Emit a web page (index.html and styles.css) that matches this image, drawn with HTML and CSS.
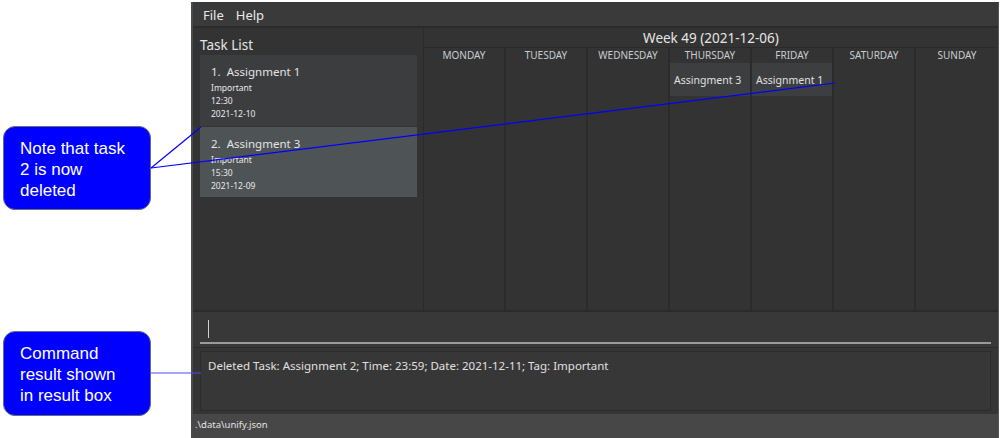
FILE: index.html
```html
<!DOCTYPE html>
<html>
<head>
<meta charset="utf-8">
<link rel="stylesheet" href="styles.css">
</head>
<body>
<div class="app">
  <div class="menubar"><span class="menu">File</span><span class="menu">Help</span></div>
  <div class="main">
    <div class="tasklist">
      <div class="tl-title">Task List</div>
      <div class="card">
        <div class="card-name">1.&nbsp; Assignment 1</div>
        <div class="card-line">Important</div>
        <div class="card-line">12:30</div>
        <div class="card-line">2021-12-10</div>
      </div>
      <div class="card selected">
        <div class="card-name">2.&nbsp; Assingment 3</div>
        <div class="card-line">Important</div>
        <div class="card-line">15:30</div>
        <div class="card-line">2021-12-09</div>
      </div>
    </div>
    <div class="calendar">
      <div class="week">Week 49 (2021-12-06)</div>
      <div class="days">
        <div class="day"><div class="dname">MONDAY</div></div>
        <div class="day"><div class="dname">TUESDAY</div></div>
        <div class="day"><div class="dname">WEDNESDAY</div></div>
        <div class="day"><div class="dname">THURSDAY</div><div class="event">Assingment 3</div></div>
        <div class="day"><div class="dname">FRIDAY</div><div class="event">Assignment 1</div></div>
        <div class="day"><div class="dname">SATURDAY</div></div>
        <div class="day last"><div class="dname">SUNDAY</div></div>
      </div>
    </div>
  </div>
  <div class="command"><div class="cmd-input"><span class="caret"></span></div></div>
  <div class="result"><div class="result-box">Deleted Task: Assignment 2; Time: 23:59; Date: 2021-12-11; Tag: Important</div></div>
  <div class="status">.\data\unify.json</div>
</div>

<div class="callout callout-1">Note that task<br>2 is now<br>deleted</div>
<div class="callout callout-2">Command<br>result shown<br>in result box</div>

<svg class="pointers" width="1002" height="438" viewBox="0 0 1002 438">
  <line x1="151" y1="168" x2="201" y2="127" stroke="#0000ff" stroke-width="1.2"/>
  <line x1="151" y1="168" x2="835" y2="83" stroke="#0000ff" stroke-width="1.2"/>
  <line x1="151" y1="373" x2="201" y2="373" stroke="#4a4aff" stroke-width="1.2"/>
</svg>
</body>
</html>
```

FILE: styles.css
```css
* { box-sizing: border-box; }
html, body { margin: 0; padding: 0; }
body {
  width: 1002px;
  height: 438px;
  background: #ffffff;
  position: relative;
  overflow: hidden;
  font-family: "Noto Sans", "Open Sans", sans-serif;
}
.app {
  margin-left: 191px;
  margin-top: 2px;
  width: 808px;
  height: 436px;
  background: #333333;
  border-left: 2px solid #4a4a4a;
  border-right: 1px solid #555555;
  display: flex;
  flex-direction: column;
  color: #dddddd;
}
.menubar {
  height: 26px;
  background: #3a3a3a;
  display: flex;
  align-items: center;
  padding-left: 10px;
  padding-top: 1px;
  gap: 12px;
  font-size: 13px;
  color: #e8e8e8;
  border-bottom: 2px solid #2b2b2b;
}
.main {
  height: 284px;
  display: flex;
  border-bottom: 2px solid #2b2b2b;
}
.tasklist {
  width: 231px;
  padding: 0 6px 0 7px;
  background: #333333;
  border-right: 1px solid #2b2b2b;
}
.tl-title {
  height: 27px;
  font-size: 13.5px;
  line-height: 14px;
  padding-top: 10px;
  color: #e6e6e6;
}
.card {
  height: 71px;
  background: #3c3d3f;
  padding: 10px 0 0 11px;
  margin-bottom: 1px;
}
.card.selected { background: #4e5355; height: 70px; }
.card-name {
  font-size: 11.5px;
  line-height: 14px;
  margin-bottom: 2px;
  color: #e4e4e4;
}
.card-line {
  font-size: 8.5px;
  line-height: 13px;
  color: #e8e8e8;
}
.calendar {
  flex: 1;
  display: flex;
  flex-direction: column;
}
.week {
  height: 20px;
  text-align: center;
  font-size: 13.5px;
  line-height: 20px;
  color: #e6e6e6;
  border-bottom: 1px solid #2b2b2b;
}
.days {
  flex: 1;
  display: grid;
  grid-template-columns: repeat(7, 1fr);
}
.day {
  border-right: 2px solid #2b2b2b;
  display: flex;
  flex-direction: column;
}
.day.last { border-right: none; }
.dname {
  height: 15px;
  text-align: center;
  font-size: 10px;
  line-height: 14px;
  color: #c8cdd2;
}
.event {
  height: 33px;
  background: #3d3e40;
  font-size: 10.5px;
  line-height: 14px;
  padding: 10px 0 0 4px;
  color: #e0e0e0;
}
.command {
  height: 36px;
  background: #383838;
  padding: 5px 7px 0 7px;
  border-bottom: 1px solid #2b2b2b;
}
.cmd-input {
  height: 27px;
  border-bottom: 2px solid #9a9a9a;
  padding: 3px 0 0 8px;
}
.caret {
  display: block;
  width: 1px;
  height: 18px;
  background: #d0d0d0;
}
.result {
  height: 66px;
  background: #353535;
  padding: 3px 7px 3px 7px;
}
.result-box {
  height: 100%;
  border: 1px solid #2c2c2c;
  background: #373737;
  padding: 6px 0 0 7px;
  font-size: 11.5px;
  line-height: 16px;
  color: #e0e0e0;
}
.status {
  flex: 1;
  background: #474747;
  font-size: 9.5px;
  line-height: 22px;
  padding-left: 2px;
  color: #e4e4e4;
}
.callout {
  position: absolute;
  left: 3px;
  width: 148px;
  height: 84px;
  background: #0000ff;
  border: 1px solid #6a6a7a;
  border-radius: 12px;
  color: #ffffff;
  font-family: "Liberation Sans", Arial, sans-serif;
  font-size: 17px;
  line-height: 21px;
  padding: 11px 0 0 16px;
}
.callout-1 { top: 126px; }
.callout-2 { top: 331px; height: 85px; }
.pointers {
  position: absolute;
  left: 0;
  top: 0;
  pointer-events: none;
}
```
